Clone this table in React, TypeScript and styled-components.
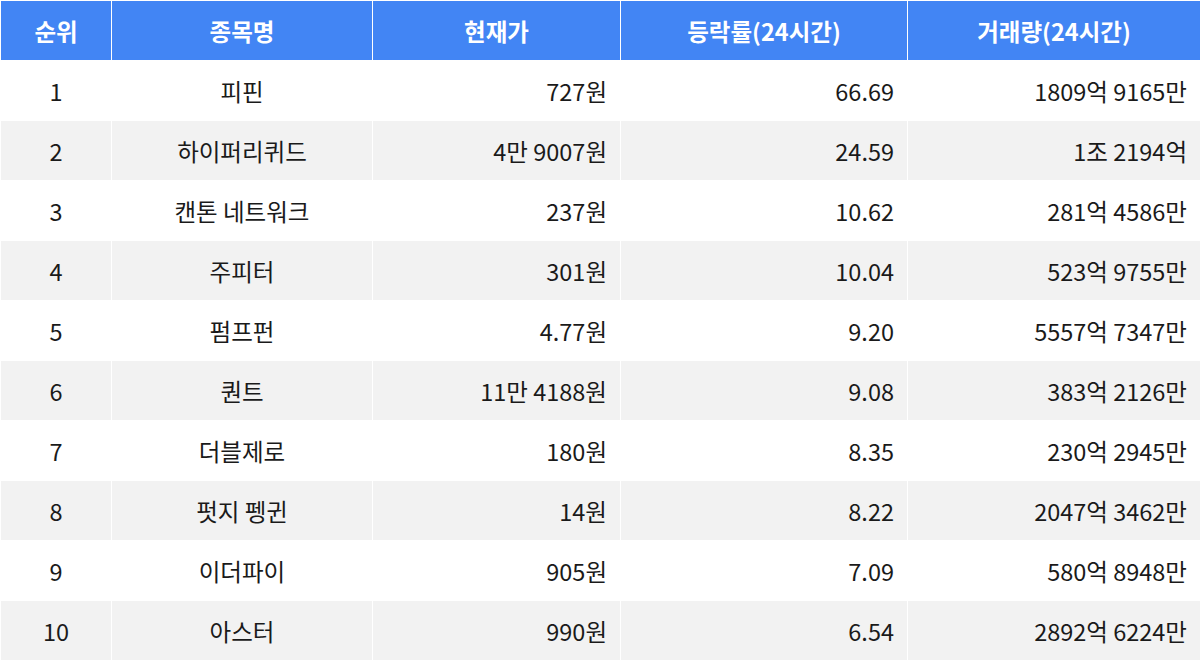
import React from 'react';
import styled, {createGlobalStyle} from "styled-components";

const GlobalStyle = createGlobalStyle`
  html, body {
    margin: 0;
    padding: 0;
    background: #ffffff;
  }

  body {
    font-family: "Noto Sans CJK KR", "Noto Sans", sans-serif;
  }
`

const CSSTable = styled.table`
  width: 1200px;
  table-layout: fixed;
  border-collapse: collapse;
  font-size: 23.5px;
  color: #1a1a1a;
`

const CSSHeadCell = styled.th<{ $w: number }>`
  width: ${p => p.$w}px;
  height: 59px;
  padding: 0;
  background: #4285f4;
  color: #ffffff;
  font-weight: 700;
  text-align: center;
  border: 1px solid #ffffff;
`

const CSSRow = styled.tr`
  background: #ffffff;

  &:nth-child(2n) {
    background: #f2f2f2;
  }
`

const CSSCell = styled.td<{ $align: 'center' | 'right' }>`
  height: 59px;
  padding: 0 13px;
  text-align: ${p => p.$align};
  border: 1px solid #ffffff;
  font-weight: 400;
  white-space: nowrap;
`

const columns = [
    {title: '순위', width: 110, align: 'center' as const},
    {title: '종목명', width: 260, align: 'center' as const},
    {title: '현재가', width: 247, align: 'right' as const},
    {title: '등락률(24시간)', width: 286, align: 'right' as const},
    {title: '거래량(24시간)', width: 292, align: 'right' as const},
];

const rows = [
    ['1', '피핀', '727원', '66.69', '1809억 9165만'],
    ['2', '하이퍼리퀴드', '4만 9007원', '24.59', '1조 2194억'],
    ['3', '캔톤 네트워크', '237원', '10.62', '281억 4586만'],
    ['4', '주피터', '301원', '10.04', '523억 9755만'],
    ['5', '펌프펀', '4.77원', '9.20', '5557억 7347만'],
    ['6', '퀀트', '11만 4188원', '9.08', '383억 2126만'],
    ['7', '더블제로', '180원', '8.35', '230억 2945만'],
    ['8', '펏지 펭귄', '14원', '8.22', '2047억 3462만'],
    ['9', '이더파이', '905원', '7.09', '580억 8948만'],
    ['10', '아스터', '990원', '6.54', '2892억 6224만'],
];

const App = () => {
    return (
        <>
            <GlobalStyle/>
            <CSSTable>
                <thead>
                <tr>
                    {columns.map(c => (
                        <CSSHeadCell key={c.title} $w={c.width}>{c.title}</CSSHeadCell>
                    ))}
                </tr>
                </thead>
                <tbody>
                {rows.map(r => (
                    <CSSRow key={r[0]}>
                        {r.map((v, i) => (
                            <CSSCell key={i} $align={columns[i].align}>{v}</CSSCell>
                        ))}
                    </CSSRow>
                ))}
                </tbody>
            </CSSTable>
        </>
    );
};

export default App;
